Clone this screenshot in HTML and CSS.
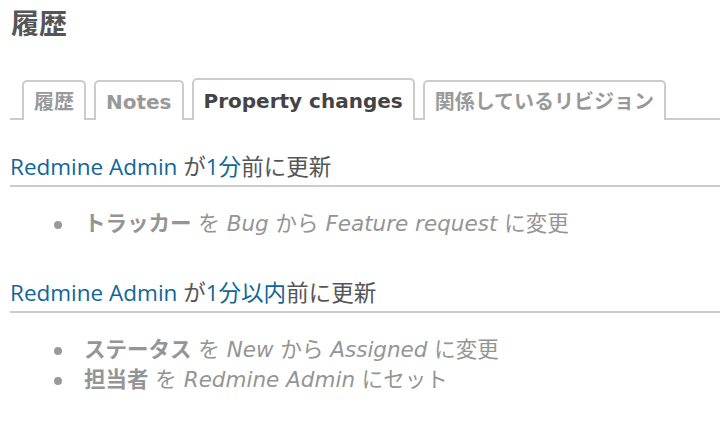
FILE: index.html
```html
<!DOCTYPE html>
<html lang="ja">
<head>
<meta charset="utf-8">
<link rel="stylesheet" href="styles.css">
</head>
<body>
<div class="page">
  <h3 class="title">履歴</h3>
  <div class="tabs">
    <a class="tab">履歴</a>
    <a class="tab">Notes</a>
    <a class="tab selected">Property changes</a>
    <a class="tab">関係しているリビジョン</a>
  </div>
  <div class="history">
    <div class="journal">
      <h4 class="jhead"><a class="user">Redmine Admin</a> が<a class="ago">1分</a>前に更新</h4>
      <ul class="details">
        <li><strong>トラッカー</strong> を <i>Bug</i> から <i>Feature request</i> に変更</li>
      </ul>
    </div>
    <div class="journal">
      <h4 class="jhead"><a class="user">Redmine Admin</a> が<a class="ago">1分以内</a>前に更新</h4>
      <ul class="details">
        <li><strong>ステータス</strong> を <i>New</i> から <i>Assigned</i> に変更</li>
        <li><strong>担当者</strong> を <i>Redmine Admin</i> にセット</li>
      </ul>
    </div>
  </div>
</div>
</body>
</html>
```
FILE: styles.css
```css
html, body {
  margin: 0;
  padding: 0;
  background: #fff;
}
body {
  font-family: "DejaVu Sans", Verdana, "Noto Sans CJK JP", sans-serif;
  color: #555;
}
.page {
  padding: 10px 0 0 10px;
}
.title {
  margin: 0;
  padding-left: 1px;
  font-size: 28px;
  line-height: 30px;
  font-weight: bold;
  color: #555;
}
.tabs {
  margin-top: 39px;
  display: flex;
  gap: 8px;
  padding-left: 12px;
  border-bottom: 2px solid #ccc;
  height: 39px;
  align-items: flex-end;
}
.tab {
  box-sizing: border-box;
  height: 40px;
  padding: 0 10px;
  border: 2px solid #ccc;
  border-bottom: none;
  border-radius: 5px 5px 0 0;
  background: #fff;
  color: #999;
  font-size: 20px;
  font-weight: bold;
  line-height: 40px;
  margin-bottom: -2px;
  white-space: nowrap;
}
.tab.selected {
  color: #444;
  height: 42px;
  line-height: 42px;
}
.history {
  display: flex;
  flex-direction: column;
  gap: 39px;
  padding-top: 32px;
}
.jhead {
  margin: 0;
  font-family: "Open Sans", "Noto Sans CJK JP", sans-serif;
  font-weight: normal;
  font-size: 22.5px;
  line-height: 30px;
  color: #555;
  border-bottom: 2px solid #ccc;
  padding-bottom: 3px;
}
.user, .ago {
  color: #169;
}
.details {
  list-style: none;
  margin: 22px 0 0 0;
  padding-left: 74px;
  font-size: 21.5px;
  line-height: 30px;
  color: #959595;
}
.details li::before {
  content: "";
  display: inline-block;
  width: 8px;
  height: 8px;
  border-radius: 50%;
  background: #999;
  margin-left: -30px;
  margin-right: 22px;
  vertical-align: 2px;
}
.details strong {
  font-weight: bold;
}
```
